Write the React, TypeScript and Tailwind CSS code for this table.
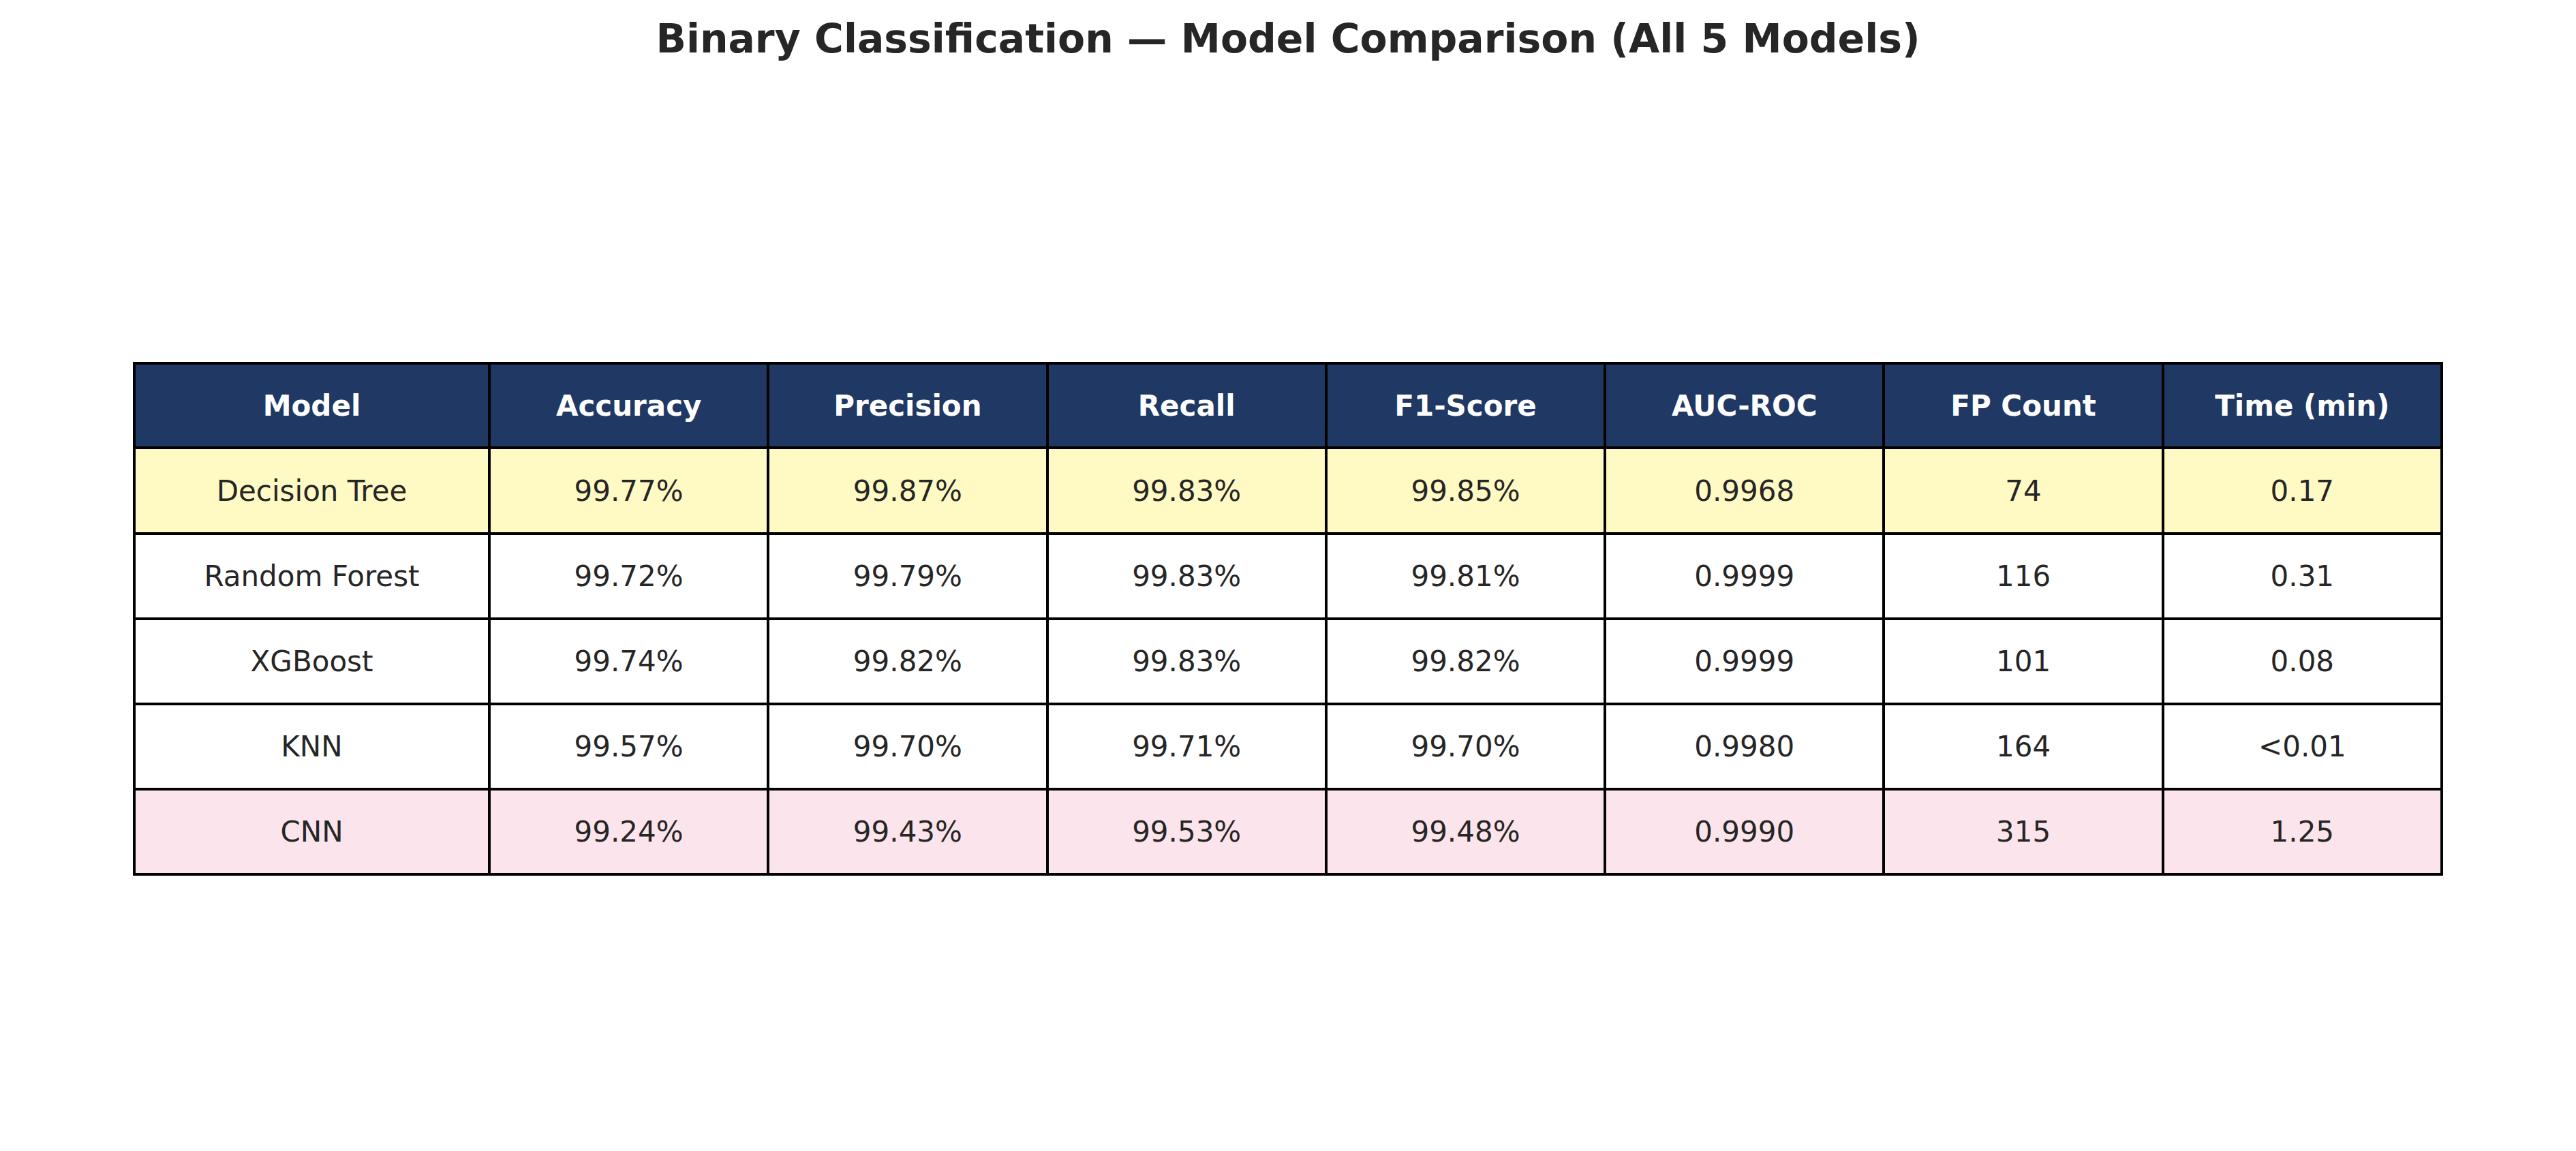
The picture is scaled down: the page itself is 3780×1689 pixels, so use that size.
import React from 'react';

type Row = {
  model: string;
  values: string[];
  tone: 'best' | 'plain' | 'worst';
};

const HEADERS = ['Model', 'Accuracy', 'Precision', 'Recall', 'F1-Score', 'AUC-ROC', 'FP Count', 'Time (min)'];

const ROWS: Row[] = [
  { model: 'Decision Tree', values: ['99.77%', '99.87%', '99.83%', '99.85%', '0.9968', '74', '0.17'], tone: 'best' },
  { model: 'Random Forest', values: ['99.72%', '99.79%', '99.83%', '99.81%', '0.9999', '116', '0.31'], tone: 'plain' },
  { model: 'XGBoost', values: ['99.74%', '99.82%', '99.83%', '99.82%', '0.9999', '101', '0.08'], tone: 'plain' },
  { model: 'KNN', values: ['99.57%', '99.70%', '99.71%', '99.70%', '0.9980', '164', '<0.01'], tone: 'plain' },
  { model: 'CNN', values: ['99.24%', '99.43%', '99.53%', '99.48%', '0.9990', '315', '1.25'], tone: 'worst' },
];

const toneClass = (tone: Row['tone']) =>
  tone === 'best' ? 'bg-[#fff9c4]' : tone === 'worst' ? 'bg-[#fce4ec]' : 'bg-white';

const App = () => {
  return (
    <div
      className="h-[1689px] w-[3780px] bg-white text-[#262626]"
      style={{ fontFamily: '"DejaVu Sans", "Liberation Sans", sans-serif' }}
    >
      <div className="h-[531px] pt-[14px]">
        <h1 className="text-center text-[58.4px] font-bold leading-normal">
          Binary Classification — Model Comparison (All 5 Models)
        </h1>
      </div>

      <div className="ml-[195px] grid w-[3390px] grid-cols-[521px_repeat(7,1fr)] border-l-4 border-t-4 border-black">
        {HEADERS.map((h) => (
          <div
            key={h}
            className="flex h-[124px] items-center justify-center border-b-4 border-r-4 border-black bg-[#1f3864] text-[42px] font-bold text-white"
          >
            {h}
          </div>
        ))}
        {ROWS.map((r, i) => (
          <React.Fragment key={r.model}>
            {[r.model, ...r.values].map((v, j) => (
              <div
                key={j}
                className={`flex ${i === 0 ? 'h-[126px]' : 'h-[125px]'} items-center justify-center border-b-4 border-r-4 border-black text-[42px] ${toneClass(r.tone)}`}
              >
                {v}
              </div>
            ))}
          </React.Fragment>
        ))}
      </div>
    </div>
  );
};

export default App;
